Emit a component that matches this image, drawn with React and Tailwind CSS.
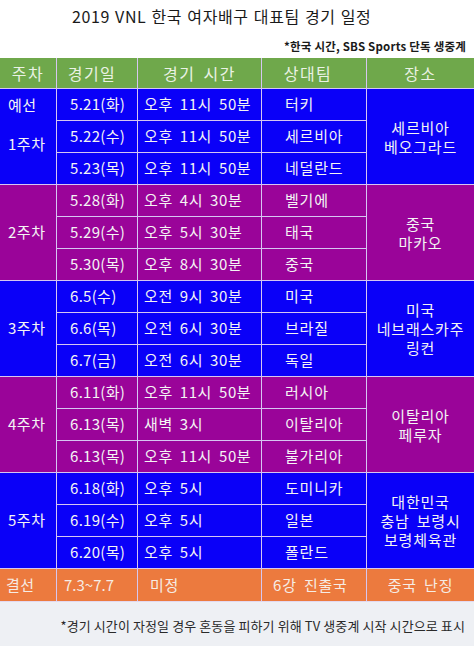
const weeks = [
  {
    color: 'bg-[#0a00f8]',
    label: ['예선', '1주차'],
    place: ['세르비아', '베오그라드'],
    games: [
      ['5.21(화)', '오후 11시 50분', '터키'],
      ['5.22(수)', '오후 11시 50분', '세르비아'],
      ['5.23(목)', '오후 11시 50분', '네덜란드'],
    ],
  },
  {
    color: 'bg-[#9a0499]',
    label: ['2주차'],
    place: ['중국', '마카오'],
    games: [
      ['5.28(화)', '오후 4시 30분', '벨기에'],
      ['5.29(수)', '오후 5시 30분', '태국'],
      ['5.30(목)', '오후 8시 30분', '중국'],
    ],
  },
  {
    color: 'bg-[#0a00f8]',
    label: ['3주차'],
    place: ['미국', '네브래스카주', '링컨'],
    games: [
      ['6.5(수)', '오전 9시 30분', '미국'],
      ['6.6(목)', '오전 6시 30분', '브라질'],
      ['6.7(금)', '오전 6시 30분', '독일'],
    ],
  },
  {
    color: 'bg-[#9a0499]',
    label: ['4주차'],
    place: ['이탈리아', '페루자'],
    games: [
      ['6.11(화)', '오후 11시 50분', '러시아'],
      ['6.13(목)', '새벽 3시', '이탈리아'],
      ['6.13(목)', '오후 11시 50분', '불가리아'],
    ],
  },
  {
    color: 'bg-[#0a00f8]',
    label: ['5주차'],
    place: ['대한민국', '충남 보령시', '보령체육관'],
    games: [
      ['6.18(화)', '오후 5시', '도미니카'],
      ['6.19(수)', '오후 5시', '일본'],
      ['6.20(목)', '오후 5시', '폴란드'],
    ],
  },
];

const font = { fontFamily: '"Noto Sans CJK KR", "Noto Sans", sans-serif' };

function Week({ week }) {
  const [first, ...rest] = week.games;
  return (
    <>
      <div className={`${week.color} row-span-3 text-[15px] text-[#f4f4f4] pl-[8px] tracking-[0.5px]`}>
        {week.label.length > 1 ? (
          <div className="flex flex-col">
            <div className="h-[31px] leading-[31px]">{week.label[0]}</div>
            <div className="mt-[8px] leading-[31px]">{week.label[1]}</div>
          </div>
        ) : (
          <div className="h-full flex items-center">{week.label[0]}</div>
        )}
      </div>
      <Cells color={week.color} game={first} />
      <div className={`${week.color} row-span-3 flex flex-col items-center justify-center text-[15px] leading-[19px] text-[#f4f4f4] tracking-[0.8px] [word-spacing:3px] text-center`}>
        {week.place.map((p, i) => (
          <div key={i}>{p}</div>
        ))}
      </div>
      {rest.map((g, i) => (
        <Cells key={i} color={week.color} game={g} />
      ))}
    </>
  );
}

function Cells({ color, game }) {
  return (
    <>
      <div className={`${color} flex items-center pl-[13px] text-[15px] text-[#f4f4f4] tracking-[0.3px]`}>{game[0]}</div>
      <div className={`${color} flex items-center pl-[6px] text-[15px] text-[#f4f4f4] tracking-[0.6px] [word-spacing:3px] whitespace-pre`}>{game[1]}</div>
      <div className={`${color} flex items-center pl-[23px] text-[15px] text-[#f4f4f4] tracking-[0.8px]`}>{game[2]}</div>
    </>
  );
}

export default function App() {
  return (
    <div className="w-[474px] h-[646px] bg-white flex flex-col overflow-hidden" style={font}>
      <div className="h-[58px] flex flex-col">
        <div className="pl-[72px] pt-[5px] text-[16px] leading-[22px] text-[#1a1a1a] tracking-[0.6px] [word-spacing:1px]">
          2019 VNL 한국 여자배구 대표팀 경기 일정
        </div>
        <div className="mt-[12px] pr-[8px] text-right text-[11.5px] leading-[14px] font-bold text-[#1a1a1a] tracking-[0.2px]">
          *한국 시간, SBS Sports 단독 생중계
        </div>
      </div>

      <div className="grid grid-cols-[56px_80px_123px_104px_107px] grid-rows-[30px_repeat(15,31px)_32px] gap-px bg-[#d6c6f2]">
        {['주차', '경기일', '경기 시간', '상대팀', '장소'].map((h, i) => (
          <div
            key={h}
            className={`bg-[#6fa84b] flex items-center justify-center text-[16px] text-[#eaf2e4] tracking-[1.5px] [word-spacing:3px] ${i === 1 ? 'pr-[10px]' : ''} ${i === 3 ? 'pr-[12px]' : ''}`}
          >
            {h}
          </div>
        ))}
        {weeks.map((w, i) => (
          <Week key={i} week={w} />
        ))}
        <div className="bg-[#ec7a3e] flex items-center pl-[6px] text-[15px] text-[#f6ece4] tracking-[0.5px]">결선</div>
        <div className="bg-[#ec7a3e] flex items-center pl-[7px] text-[15px] text-[#f6ece4]">7.3~7.7</div>
        <div className="bg-[#ec7a3e] flex items-center pl-[12px] text-[15px] text-[#f6ece4] tracking-[0.8px]">미정</div>
        <div className="bg-[#ec7a3e] flex items-center pl-[11px] text-[15px] text-[#f6ece4] tracking-[0.8px] [word-spacing:3px]">6강 진출국</div>
        <div className="bg-[#ec7a3e] flex items-center justify-center text-[15px] text-[#f6ece4] tracking-[0.8px] [word-spacing:3px]">중국 난징</div>
      </div>

      <div className="flex-1 bg-[#eef0f4] border-t border-[#e3d9f0] flex items-center justify-end pr-[9px]">
        <div className="text-[13px] text-[#2a2a2a] tracking-[0.1px] pt-[4px]">
          *경기 시간이 자정일 경우 혼동을 피하기 위해 TV 생중계 시작 시간으로 표시
        </div>
      </div>
    </div>
  );
}
